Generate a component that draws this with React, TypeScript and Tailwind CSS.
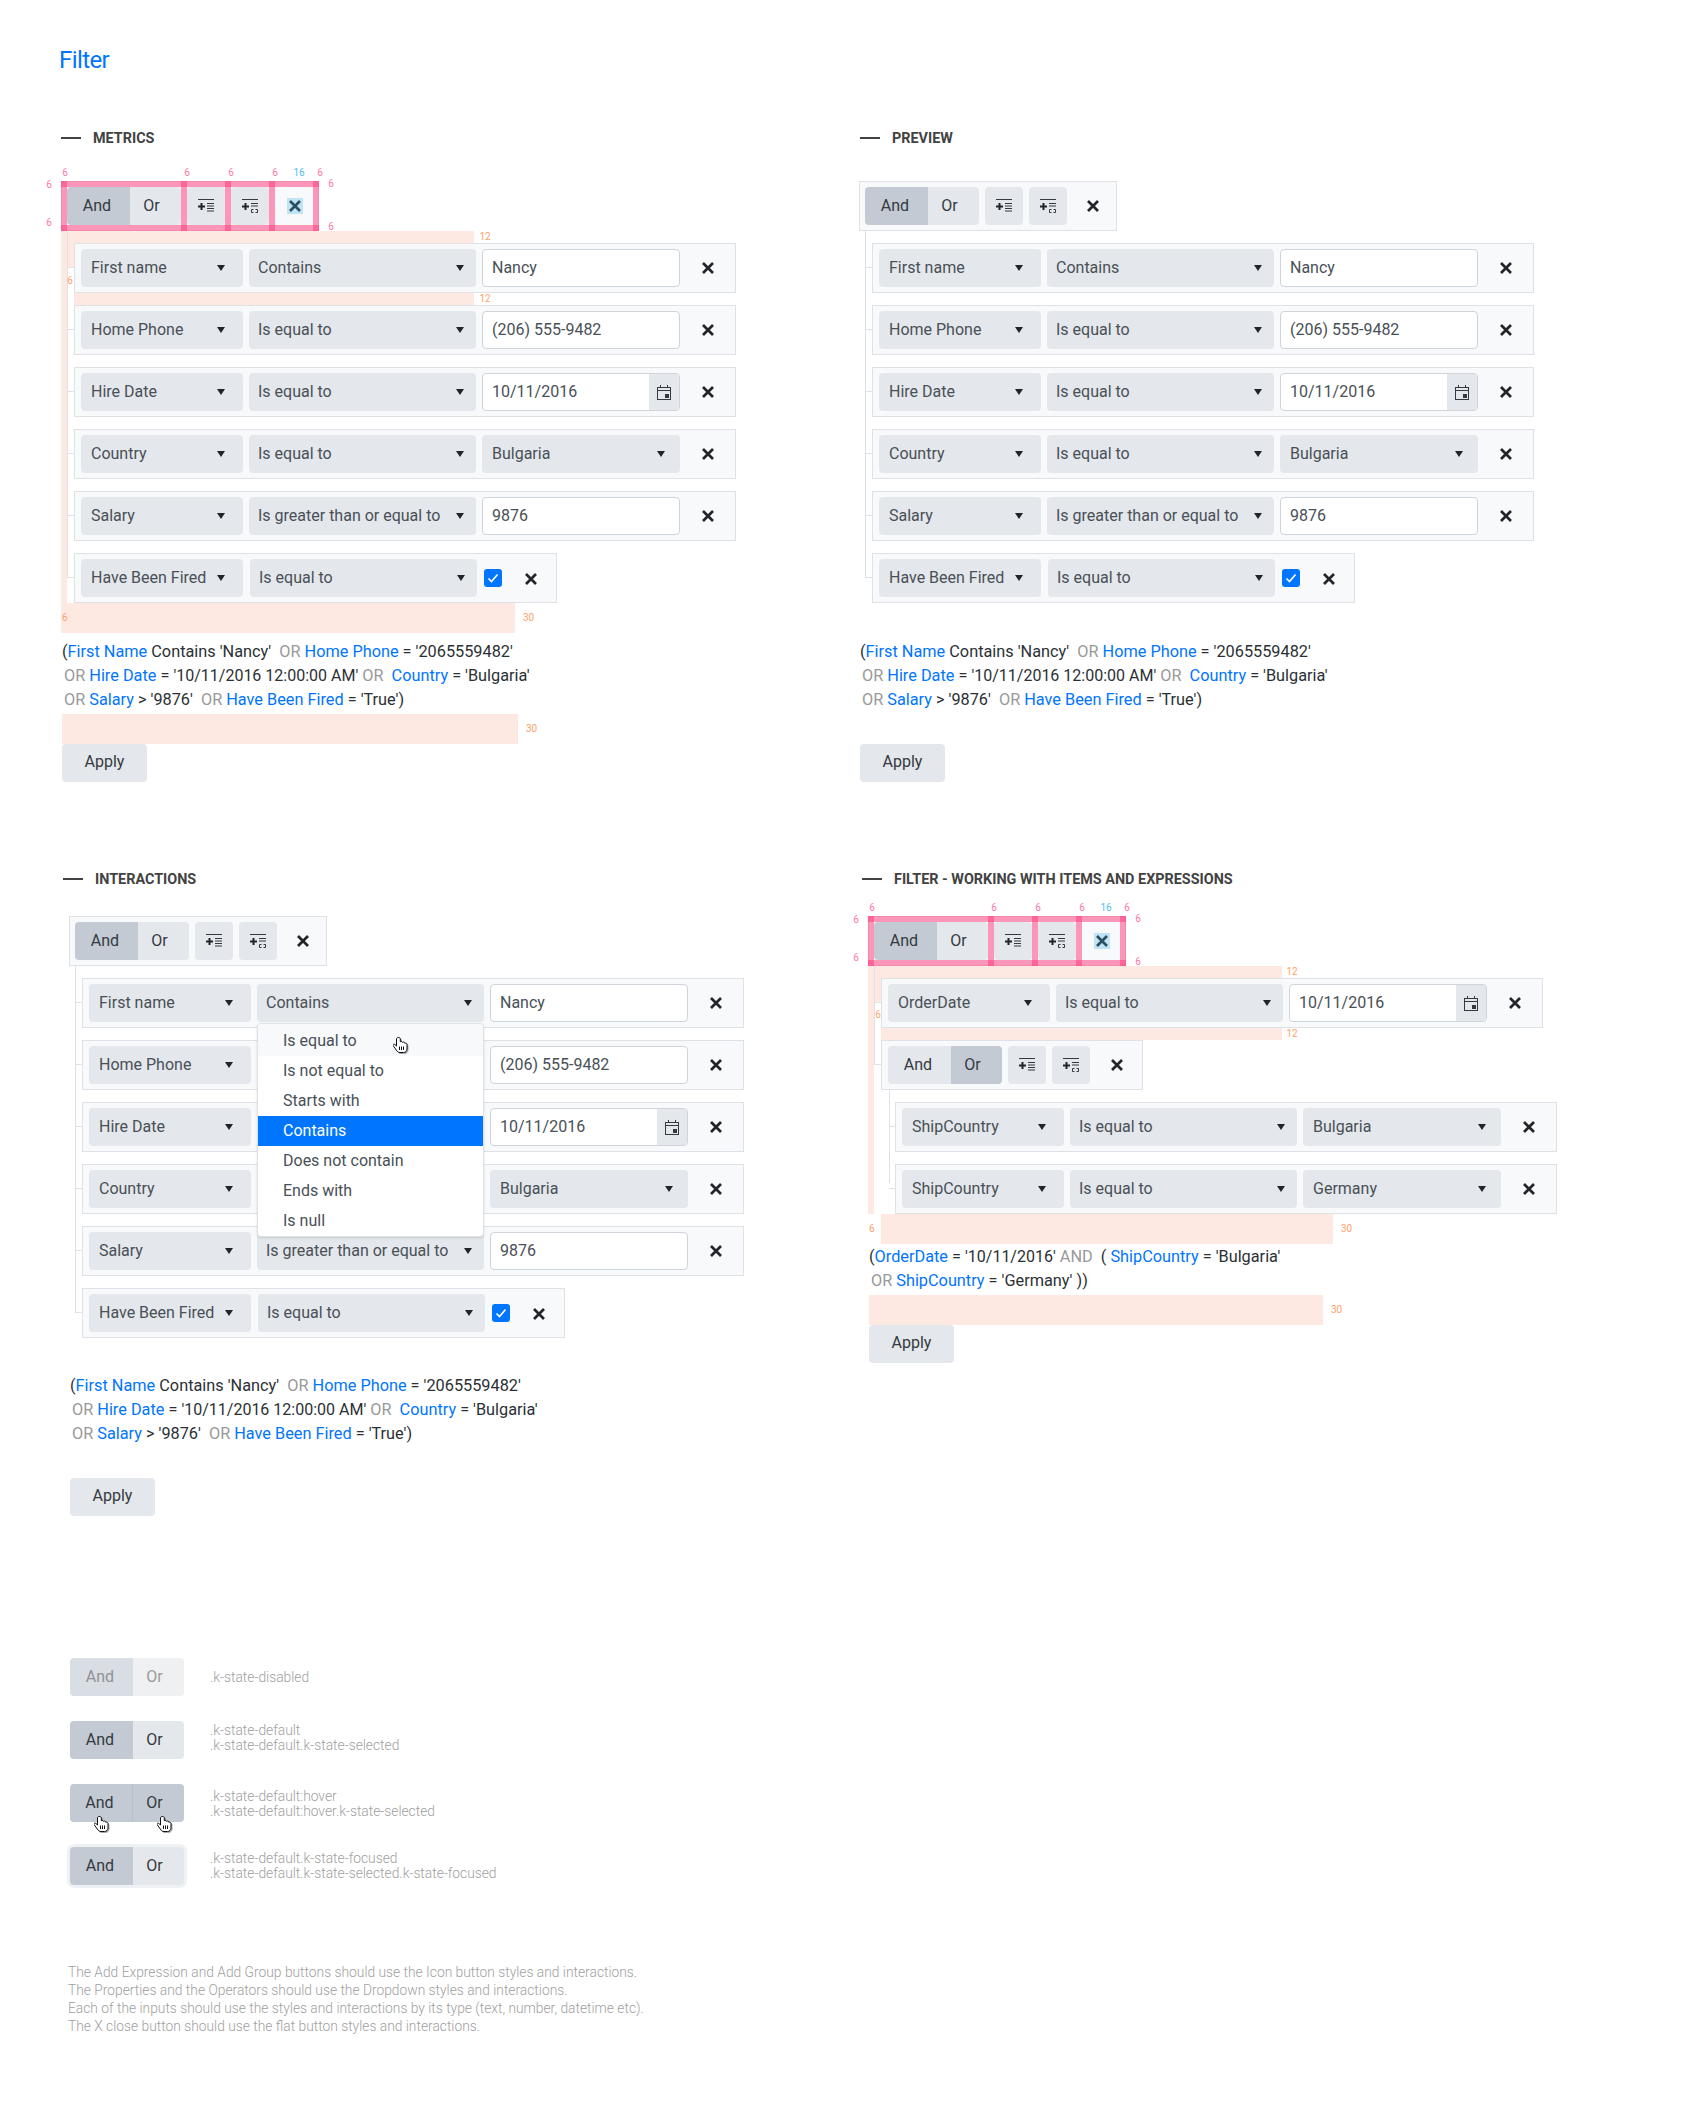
import React from "react";

const TEXT = "text-[#495057]";

const Caret = () => (
  <svg width="8" height="6" viewBox="0 0 8 6" className="flex-shrink-0">
    <polygon points="0,0 8,0 4,6" fill="#212529" />
  </svg>
);

const CloseIcon = () => (
  <svg width="12" height="12" viewBox="0 0 12 12">
    <path d="M1 1 L11 11 M11 1 L1 11" stroke="#212529" strokeWidth="2.7" />
  </svg>
);

const CalendarIcon = () => (
  <svg width="14" height="15" viewBox="0 0 14 15" fill="none">
    <rect x="0.5" y="2.5" width="13" height="12" stroke="#343a40" />
    <path d="M0.5 5.5 H13.5 M3.5 0 V3 M10.5 0 V3" stroke="#343a40" />
    <rect x="8" y="9" width="4" height="4" fill="#343a40" />
  </svg>
);

const AddExpressionIcon = () => (
  <svg width="16" height="16" viewBox="0 0 16 16">
    <path d="M0 1.5 H16 M9 5.5 H16 M9 8 H16 M9 10.5 H16 M9 13 H16" stroke="#343a40" />
    <path d="M3.5 5 V12 M0 8.5 H7" stroke="#212529" strokeWidth="2" />
  </svg>
);

const AddGroupIcon = () => (
  <svg width="16" height="16" viewBox="0 0 16 16" fill="none">
    <path d="M0 1.5 H16 M9 5.5 H16 M9 8 H16" stroke="#343a40" />
    <path d="M3.5 5 V12 M0 8.5 H7" stroke="#212529" strokeWidth="2" />
    <path d="M11.5 11.5 H9.5 V14.5 H11.5 M13.5 11.5 H15.5 V14.5 H13.5" stroke="#343a40" />
  </svg>
);

const HandCursor = ({ className }: { className: string }) => (
  <svg
    width="16"
    height="18"
    viewBox="0 0 16 18"
    className={`drop-shadow-[1px_1px_0_rgba(0,0,0,0.35)] ${className}`}
  >
    <path
      d="M5 1.5c-.8 0-1.5.7-1.5 1.5v7L2 8.6c-.7-.6-1.7-.5-2 .2 0 .5.1.8.4 1.2L4 15c.6.8 1.5 1.5 3 1.5h3.5c2 0 3.5-1.5 3.5-3.5V8.5c0-.8-.6-1.4-1.4-1.4-.3 0-.6.1-.8.2 0-.7-.6-1.3-1.3-1.3-.4 0-.7.1-1 .4-.2-.6-.7-1-1.3-1-.4 0-.7.1-.9.3V3c0-.8-.7-1.5-1.5-1.5z"
      fill="#fff"
      stroke="#111"
      strokeWidth="1"
    />
    <path d="M6.5 10.5V14M8.5 10.5V14M10.5 10.5V14" stroke="#111" strokeWidth="1" />
  </svg>
);

const SelectBox = ({
  label,
  className,
  pad = "pl-[10px]",
  caretPad = "pr-[18px]",
}: {
  label: string;
  className: string;
  pad?: string;
  caretPad?: string;
}) => (
  <div
    className={`flex items-center justify-between h-[38px] rounded-[4px] bg-[#e4e7eb] flex-shrink-0 ${TEXT} ${className} ${pad} ${caretPad}`}
  >
    <span className="whitespace-nowrap">{label}</span>
    <Caret />
  </div>
);

const Field = ({ label }: { label: string }) => <SelectBox label={label} className="w-[162px]" />;

const Operator = ({ label }: { label: string }) => (
  <SelectBox label={label} className="w-[227px]" pad="pl-[9px]" caretPad="pr-[12px]" />
);

const ValueSelect = ({ label }: { label: string }) => (
  <SelectBox label={label} className="w-[198px]" caretPad="pr-[15px]" />
);

const TextInput = ({ value }: { value: string }) => (
  <div className={`flex items-center h-[38px] w-[198px] pl-[9px] rounded-[4px] border border-[#ced4da] bg-white ${TEXT}`}>
    {value}
  </div>
);

const DateInput = ({ value }: { value: string }) => (
  <div className={`flex h-[38px] w-[198px] rounded-[4px] border border-[#ced4da] bg-white overflow-hidden ${TEXT}`}>
    <div className="flex-1 flex items-center pl-[9px]">{value}</div>
    <div className="w-[30px] flex items-center justify-center bg-[#e4e7eb]">
      <CalendarIcon />
    </div>
  </div>
);

const CloseButton = ({ className = "" }: { className?: string }) => (
  <div className={`flex items-center justify-center w-[38px] h-[38px] ${className}`}>
    <CloseIcon />
  </div>
);

type RowProps = { field: string; op: string; value: React.ReactNode };

const Row = ({ field, op, value }: RowProps) => (
  <div className="flex items-center gap-[6px] w-[662px] h-[50px] pl-[6px] border border-[#dee2e6] bg-[#f8f9fa]">
    <Field label={field} />
    <Operator label={op} />
    {value}
    <CloseButton className="ml-[3px]" />
  </div>
);

const BoolRow = ({ field, op }: { field: string; op: string }) => (
  <div className="flex items-center w-[483px] h-[50px] pl-[6px] border border-[#dee2e6] bg-[#f8f9fa]">
    <Field label={field} />
    <div className="ml-[7px]">
      <Operator label={op} />
    </div>
    <div className="ml-[7px] w-[18px] h-[18px] rounded-[3px] bg-[#0075ff] flex items-center justify-center">
      <svg width="12" height="12" viewBox="0 0 12 12" fill="none">
        <path d="M1.5 6.5 L4.5 9.5 L10.5 2.5" stroke="#fff" strokeWidth="1.6" />
      </svg>
    </div>
    <CloseButton className="ml-[10px] mt-[2px]" />
  </div>
);

const AndOr = ({ selected }: { selected: "And" | "Or" }) => (
  <div className="flex h-[38px] rounded-[4px] overflow-hidden">
    <div className={`flex items-center justify-center w-[63px] pr-[3px] ${selected === "And" ? "bg-[#c3cad3]" : "bg-[#e4e7eb]"}`}>And</div>
    <div className={`flex items-center justify-center w-[51px] pr-[8px] ${selected === "Or" ? "bg-[#c3cad3]" : "bg-[#e4e7eb]"}`}>Or</div>
  </div>
);

const Toolbar = ({
  selected = "And",
  className = "w-[258px] pl-[5px]",
  closeClass = "ml-px",
}: {
  selected?: "And" | "Or";
  className?: string;
  closeClass?: string;
}) => (
  <div className={`flex items-center gap-[6px] h-[50px] border border-[#dee2e6] bg-[#f8f9fa] text-[#343a40] ${className}`}>
    <AndOr selected={selected} />
    <div className="flex items-center justify-center w-[38px] h-[38px] rounded-[4px] bg-[#e4e7eb]">
      <AddExpressionIcon />
    </div>
    <div className="flex items-center justify-center w-[38px] h-[38px] rounded-[4px] bg-[#e4e7eb]">
      <AddGroupIcon />
    </div>
    <CloseButton className={closeClass} />
  </div>
);

const Branched = ({ nested = false, children }: { nested?: boolean; children: React.ReactNode }) => (
  <div className="relative">
    <div className={`absolute h-px bg-[#dee2e6] ${nested ? "-left-[6px] w-[6px] top-[24px]" : "-left-[7px] w-[7px] top-[24px]"}`} />
    {children}
  </div>
);

const Tree = ({
  line,
  nested = false,
  children,
}: {
  line: string;
  nested?: boolean;
  children: React.ReactNode;
}) => (
  <div className={`relative flex flex-col gap-3 pt-3 ${nested ? "pl-[14px]" : "pl-[13px]"}`}>
    <div className={`absolute top-0 w-px bg-[#dee2e6] ${nested ? "left-[8px]" : "left-[6px]"} ${line}`} />
    {children}
  </div>
);

const Mark = ({ className }: { className: string }) => <div className={`absolute ${className}`} />;

const Note = ({ className, children }: { className: string; children: string }) => (
  <span className={`absolute -translate-x-1/2 -translate-y-1/2 text-[10px] leading-none ${className}`}>{children}</span>
);

const PinkCell = ({ className, children }: { className: string; children: string }) => (
  <span className={`text-center text-[10px] leading-none text-[#ff77a6] ${className}`}>{children}</span>
);

// pink margin guides drawn over a toolbar
const ToolbarRedlines = () => (
  <>
    <div className="absolute left-0 top-0 w-[258px] h-[50px] flex flex-col justify-between">
      <div className="h-[6px] bg-[#ff3377]/50" />
      <div className="h-[6px] bg-[#ff3377]/50" />
    </div>
    <div className="absolute left-0 top-0 h-[50px] flex">
      <div className="w-[6px] bg-[#ff3377]/50" />
      <div className="w-[6px] ml-[114px] bg-[#ff3377]/50" />
      <div className="w-[6px] ml-[38px] bg-[#ff3377]/50" />
      <div className="w-[6px] ml-[38px] bg-[#ff3377]/50" />
      <div className="w-[6px] ml-[38px] bg-[#ff3377]/50" />
    </div>
    <Mark className="left-[226px] top-[17px] w-[16px] h-[16px] bg-[#40b4e5]/30" />
    <div className="absolute left-0 -top-[13px] flex">
      <PinkCell className="w-[8px]">6</PinkCell>
      <PinkCell className="w-[8px] ml-[114px]">6</PinkCell>
      <PinkCell className="w-[8px] ml-[36px]">6</PinkCell>
      <PinkCell className="w-[8px] ml-[36px]">6</PinkCell>
      <span className="w-[16px] ml-[12px] text-center text-[10px] leading-none text-[#55bbee]">16</span>
      <PinkCell className="w-[8px] ml-[9px]">6</PinkCell>
    </div>
    <div className="absolute -left-[16px] -top-[1px] h-[48px] flex flex-col justify-between">
      <PinkCell className="w-[8px]">6</PinkCell>
      <PinkCell className="w-[8px]">6</PinkCell>
    </div>
    <div className="absolute left-[266px] -top-[2px] h-[53px] flex flex-col justify-between">
      <PinkCell className="w-[8px]">6</PinkCell>
      <PinkCell className="w-[8px]">6</PinkCell>
    </div>
  </>
);

const GapNote = ({ children }: { children: string }) => (
  <span className="ml-[8px] self-center text-[10px] leading-none text-[#ffa06a]">{children}</span>
);

const Key = ({ children }: { children: string }) => <span className="text-[#0075ff]">{children}</span>;
const Or = ({ children = "OR" }: { children?: string }) => <span className="text-[#999999]">{children}</span>;
const DateValue = ({ children }: { children: string }) => <span className="text-[16px]">{children}</span>;

const Expression = ({ className }: { className: string }) => (
  <div className={`ml-px text-[16.3px] leading-[24px] text-[#2b3035] whitespace-pre ${className}`}>
    <div>
      (<Key>First Name</Key> Contains 'Nancy'  <Or /> <Key>Home Phone</Key> = '2065559482'
    </div>
    <div className="ml-[2px]">
      <Or /> <Key>Hire Date</Key> = <DateValue>'10/11/2016 12:00:00 AM'</DateValue> <Or />  <Key>Country</Key> = 'Bulgaria'
    </div>
    <div className="ml-[2px]">
      <Or /> <Key>Salary</Key> &gt; '9876'  <Or /> <Key>Have Been Fired</Key> = 'True')
    </div>
  </div>
);

const ApplyButton = ({ className = "" }: { className?: string }) => (
  <div className={`flex items-center justify-center ml-px pb-[2px] w-[85px] h-[38px] rounded-[4px] bg-[#e4e7eb] text-[#343a40] ${className}`}>
    Apply
  </div>
);

const Heading = ({ label, className }: { label: string; className: string }) => (
  <div className={`flex items-center h-[20px] ${className}`}>
    <div className="w-[20px] h-[2px] bg-[#424242]" />
    <span className="ml-[12px] pt-[2px] text-[14.4px] font-bold text-[#424242] whitespace-nowrap">{label}</span>
  </div>
);

const EmployeeRows = ({ menuOpen = false }: { menuOpen?: boolean }) => (
  <>
    <Branched>
      <Row field="First name" op="Contains" value={<TextInput value="Nancy" />} />
    </Branched>
    <Branched>
      <Row field="Home Phone" op={menuOpen ? "" : "Is equal to"} value={<TextInput value="(206) 555-9482" />} />
    </Branched>
    <Branched>
      <Row field="Hire Date" op={menuOpen ? "" : "Is equal to"} value={<DateInput value="10/11/2016" />} />
    </Branched>
    <Branched>
      <Row field="Country" op={menuOpen ? "" : "Is equal to"} value={<ValueSelect label="Bulgaria" />} />
    </Branched>
    <Branched>
      <Row field="Salary" op="Is greater than or equal to" value={<TextInput value="9876" />} />
    </Branched>
    <Branched>
      <BoolRow field="Have Been Fired" op="Is equal to" />
    </Branched>
  </>
);

const Metrics = () => (
  <section className="w-[798px] flex-shrink-0">
    <Heading label="METRICS" className="mb-[33px]" />
    <div className="relative">
      <Mark className="left-0 top-[50px] w-[6px] h-[372px] bg-[#fde8e2]" />
      <Mark className="left-0 top-[50px] w-[413px] h-[12px] bg-[#fde8e2]" />
      <Mark className="left-[7px] top-[50px] w-[6px] h-[37px] bg-[#fde8e2]" />
      <Mark className="left-[13px] top-[111px] w-[400px] h-[13px] bg-[#fde8e2]" />
      <Toolbar />
      <Tree line="h-[347px]">
        <EmployeeRows />
      </Tree>
      <div className="flex h-[30px]">
        <div className="flex items-center w-[454px] pl-px bg-[#fde8e2] text-[10px] leading-none text-[#ffa06a]">6</div>
        <GapNote>30</GapNote>
      </div>
      <Expression className="mt-[7px] mb-[2px]" />
      <div className="flex h-[30px] ml-px">
        <div className="w-[456px] bg-[#fde8e2]" />
        <GapNote>30</GapNote>
      </div>
      <ApplyButton />
      <ToolbarRedlines />
      <Note className="left-[424px] top-[56px] text-[#ffa06a]">12</Note>
      <Note className="left-[424px] top-[118px] text-[#ffa06a]">12</Note>
      <Note className="left-[9px] top-[100px] text-[#ffa06a]">6</Note>
    </div>
  </section>
);

const Preview = () => (
  <section>
    <Heading label="PREVIEW" className="ml-px mb-[33px]" />
    <Toolbar />
    <Tree line="h-[347px]">
      <EmployeeRows />
    </Tree>
    <Expression className="mt-[37px]" />
    <ApplyButton className="mt-[32px]" />
  </section>
);

const OperatorMenu = () => {
  const items = ["Is equal to", "Is not equal to", "Starts with", "Contains", "Does not contain", "Ends with", "Is null"];
  return (
    <div className={`absolute left-[188px] top-[107px] w-[227px] border border-[#dee2e6] rounded-[4px] bg-white shadow-sm overflow-hidden ${TEXT}`}>
      {items.map((item, i) => (
        <div
          key={item}
          className={`flex items-center pl-[25px] ${i === 0 ? "h-[32px] pt-[2px] bg-[#f8f9fa]" : "h-[30px]"} ${item === "Contains" ? "bg-[#0075ff] text-white" : ""}`}
        >
          {item}
        </div>
      ))}
    </div>
  );
};

const Interactions = () => (
  <section className="w-[799px] flex-shrink-0">
    <Heading label="INTERACTIONS" className="-ml-[6px] mb-[27px]" />
    <div className="relative">
      <Toolbar />
      <Tree line="h-[347px]">
        <EmployeeRows menuOpen />
      </Tree>
      <OperatorMenu />
      <HandCursor className="absolute left-[324px] top-[120px]" />
      <Expression className="mt-[36px]" />
      <ApplyButton className="mt-[32px]" />
    </div>
  </section>
);

const ItemsAndExpressions = () => (
  <section>
    <Heading label="FILTER - WORKING WITH ITEMS AND EXPRESSIONS" className="-ml-[6px] mb-[27px]" />
    <div className="relative">
      <Mark className="left-0 top-[50px] w-[6px] h-[248px] bg-[#fde8e2]" />
      <Mark className="left-0 top-[50px] w-[414px] h-[12px] bg-[#fde8e2]" />
      <Mark className="left-[6px] top-[50px] w-[7px] h-[37px] bg-[#fde8e2]" />
      <Mark className="left-[13px] top-[111px] w-[401px] h-[13px] bg-[#fde8e2]" />
      <Toolbar />
      <Tree line="h-[99px]">
        <Branched>
          <Row field="OrderDate" op="Is equal to" value={<DateInput value="10/11/2016" />} />
        </Branched>
        <div>
          <Branched>
            <Toolbar selected="Or" className="w-[262px] pl-[6px]" closeClass="ml-[2px]" />
          </Branched>
          <Tree nested line="h-[93px]">
            <Branched nested>
              <Row field="ShipCountry" op="Is equal to" value={<ValueSelect label="Bulgaria" />} />
            </Branched>
            <Branched nested>
              <Row field="ShipCountry" op="Is equal to" value={<ValueSelect label="Germany" />} />
            </Branched>
          </Tree>
        </div>
      </Tree>
      <div className="flex h-[30px]">
        <span className="w-[13px] pl-px self-center text-[10px] leading-none text-[#ffa06a]">6</span>
        <div className="w-[452px] bg-[#fde8e2]" />
        <GapNote>30</GapNote>
      </div>
      <div className="ml-px mt-px mb-[2px] text-[16.3px] leading-[24px] text-[#2b3035] whitespace-pre">
        <div>
          (<Key>OrderDate</Key> = <DateValue>'10/11/2016'</DateValue> <Or>AND</Or>  ( <Key>ShipCountry</Key> = 'Bulgaria'
        </div>
        <div className="ml-[2px]">
          <Or /> <Key>ShipCountry</Key> = 'Germany' ))
        </div>
      </div>
      <div className="flex h-[30px] ml-px">
        <div className="w-[454px] bg-[#fde8e2]" />
        <GapNote>30</GapNote>
      </div>
      <ApplyButton />
      <ToolbarRedlines />
      <Note className="left-[424px] top-[56px] text-[#ffa06a]">12</Note>
      <Note className="left-[424px] top-[118px] text-[#ffa06a]">12</Note>
      <Note className="left-[10px] top-[99px] text-[#ffa06a]">6</Note>
    </div>
  </section>
);

const StateRow = ({
  andClass,
  orClass,
  groupClass = "",
  labelClass = "",
  labels,
  children,
}: {
  andClass: string;
  orClass: string;
  groupClass?: string;
  labelClass?: string;
  labels: string[];
  children?: React.ReactNode;
}) => (
  <div className="flex items-center h-[38px]">
    <div className={`relative flex w-[114px] h-[38px] rounded-[4px] ${groupClass}`}>
      <div className={`flex items-center justify-center w-[63px] pr-[3px] rounded-l-[4px] ${andClass}`}>And</div>
      <div className={`flex items-center justify-center w-[51px] pr-[8px] rounded-r-[4px] ${orClass}`}>Or</div>
      {children}
    </div>
    <div className={`ml-[26px] text-[13.8px] leading-[15px] font-light text-[#a0a0a0] ${labelClass}`}>
      {labels.map((l) => (
        <div key={l}>{l}</div>
      ))}
    </div>
  </div>
);

const States = () => (
  <div className="ml-[70px] mt-[142px] flex flex-col gap-[25px]">
    <StateRow
      andClass="bg-[#d9dde4] text-[#8f9296]"
      orClass="bg-[#eff0f2] text-[#9a9a9a]"
      labels={[".k-state-disabled"]}
    />
    <StateRow
      andClass="bg-[#c3cad3] text-[#343a40]"
      orClass="bg-[#e4e7eb] text-[#343a40]"
      labelClass="-mt-[4px]"
      labels={[".k-state-default", ".k-state-default.k-state-selected"]}
    />
    <StateRow
      andClass="bg-[#c3cad3] text-[#343a40] border-r border-[#b8bfc9]"
      orClass="bg-[#c3cad3] text-[#343a40]"
      labelClass="mt-[2px]"
      labels={[".k-state-default:hover", ".k-state-default:hover.k-state-selected"]}
    >
      <HandCursor className="absolute left-[24px] top-[31px]" />
      <HandCursor className="absolute left-[87px] top-[31px]" />
    </StateRow>
    <StateRow
      andClass="bg-[#c3cad3] text-[#343a40]"
      orClass="bg-[#e4e7eb] text-[#343a40]"
      groupClass="ring-[3px] ring-[#eff1f4]"
      labels={[".k-state-default.k-state-focused", ".k-state-default.k-state-selected.k-state-focused"]}
    />
  </div>
);

const Footnotes = () => (
  <div className="ml-[68px] mt-[78px] text-[13.8px] leading-[18px] font-light text-[#a0a0a0]">
    <div>The Add Expression and Add Group buttons should use the Icon button styles and interactions.</div>
    <div>The Properties and the Operators should use the Dropdown styles and interactions.</div>
    <div>Each of the inputs should use the styles and interactions by its type (text, number, datetime etc).</div>
    <div>The X close button should use the flat button styles and interactions.</div>
  </div>
);

const App = () => {
  return (
    <div className="w-[1694px] h-[2120px] bg-white overflow-hidden font-['Roboto',sans-serif] text-[16px]">
      <h1 className="ml-[59px] pt-[44px] text-[24px] tracking-[-0.6px] leading-[32px] text-[#0075ff]">Filter</h1>
      <div className="flex pl-[61px] mt-[52px]">
        <Metrics />
        <Preview />
      </div>
      <div className="flex pl-[69px] mt-[87px]">
        <Interactions />
        <ItemsAndExpressions />
      </div>
      <States />
      <Footnotes />
    </div>
  );
};

export default App;
